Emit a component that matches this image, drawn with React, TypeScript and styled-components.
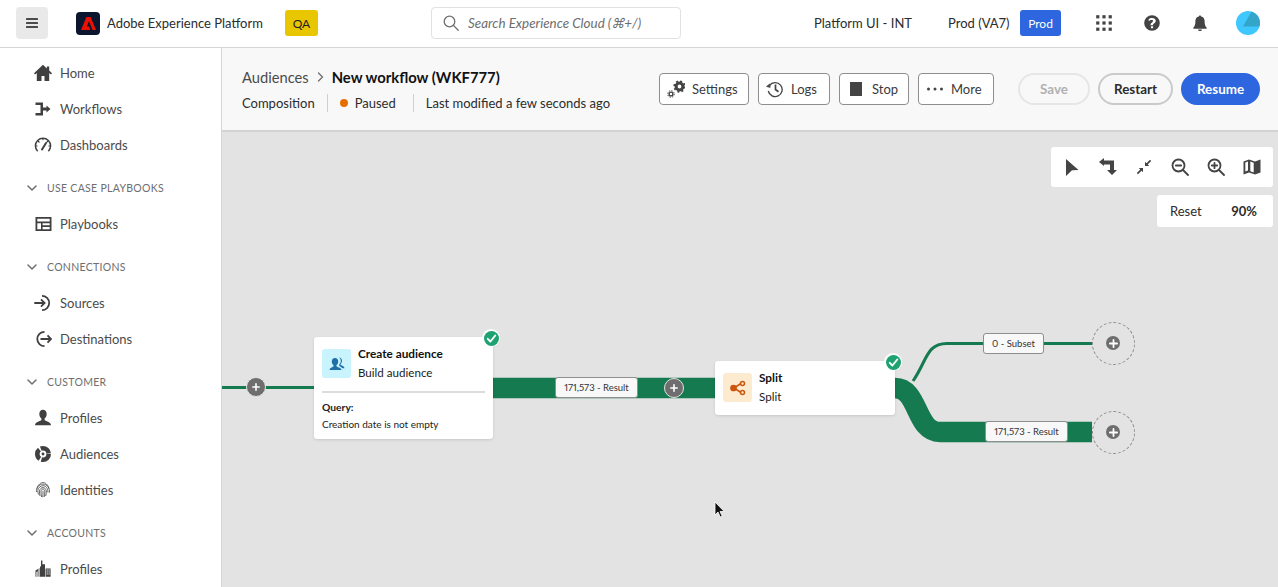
import React from "react";
import styled, { createGlobalStyle } from "styled-components";

const GlobalStyle = createGlobalStyle`
  html, body { margin: 0; padding: 0; height: 100%; overflow: hidden; }
  body { font-family: "Lato", "Open Sans", sans-serif; color: #2c2c2c; background: #fff; }
  #root { height: 100%; }
  * { box-sizing: border-box; }
`;

const Page = styled.div`
  height: 100vh;
  display: flex;
  flex-direction: column;
`;

const TopBar = styled.header`
  height: 48px;
  flex: none;
  display: flex;
  align-items: center;
  background: #fff;
  border-bottom: 1px solid #d5d5d5;
  padding: 0 18px 1px 16px;
`;

const MenuButton = styled.button`
  width: 32px;
  height: 32px;
  flex: none;
  border: 0;
  padding: 0;
  border-radius: 4px;
  background: #e9e9e9;
  display: flex;
  align-items: center;
  justify-content: center;
  color: #4b4b4b;
  margin-right: 28px;
`;

const Logo = styled.div`
  width: 24px;
  height: 23px;
  flex: none;
  border-radius: 4px;
  background: #0b1530;
  display: flex;
  align-items: center;
  justify-content: center;
  margin-right: 7px;
`;

const Product = styled.span`
  font-size: 13px;
  width: 178px;
  flex: none;
  color: #2c2c2c;
`;

const Chip = styled.span<{ $bg: string; $fg: string; $w: number }>`
  width: ${(p) => p.$w}px;
  height: 26px;
  border-radius: 3px;
  background: ${(p) => p.$bg};
  color: ${(p) => p.$fg};
  font-size: 12px;
  display: flex;
  align-items: center;
  justify-content: center;
  flex: none;
`;

const Search = styled.div`
  width: 250px;
  height: 32px;
  flex: none;
  margin-left: 113px;
  border: 1px solid #e1e1e1;
  border-radius: 4px;
  display: flex;
  align-items: center;
  gap: 9px;
  padding-left: 11px;
  color: #6e6e6e;
  font-size: 13.4px;
  font-style: italic;
  white-space: nowrap;
`;

const OrgName = styled.span<{ $ml: number; $w: number }>`
  margin-left: ${(p) => p.$ml}px;
  width: ${(p) => p.$w}px;
  font-size: 13px;
  color: #2c2c2c;
  flex: none;
  white-space: nowrap;
`;

const HeaderIcons = styled.div`
  display: flex;
  align-items: center;
  flex: none;
  margin-left: 35px;
  gap: 32px;
  color: #444;
`;

const Avatar = styled.div`
  width: 24px;
  height: 24px;
  margin-left: -4px;
`;

const Body = styled.div`
  flex: 1;
  min-height: 0;
  display: flex;
`;

const Sidebar = styled.nav`
  width: 222px;
  flex: none;
  background: #fff;
  border-right: 1px solid #d5d5d5;
  padding: 7px 0 0;
  overflow: hidden;
`;

const NavItem = styled.div`
  height: 36px;
  display: flex;
  align-items: center;
  padding-left: 34px;
  gap: 8px;
  font-size: 13px;
  color: #4b4b4b;
  flex: none;
`;

const NavIcon = styled.span`
  width: 18px;
  height: 18px;
  display: flex;
  color: #404040;
`;

const SectionHead = styled.div`
  height: 43px;
  padding: 7px 0 0 27px;
  display: flex;
  align-items: center;
  gap: 10px;
  font-size: 10.5px;
  letter-spacing: 0.3px;
  color: #6e6e6e;
`;

const Main = styled.main`
  flex: 1;
  min-width: 0;
  display: flex;
  flex-direction: column;
`;

const SubHeader = styled.div`
  height: 84px;
  flex: none;
  background: #f8f8f8;
  border-bottom: 2px solid #d3d3d3;
  display: flex;
  align-items: center;
  padding: 0 18px 0 20px;
`;

const TitleBlock = styled.div`
  width: 417px;
  flex: none;
  display: flex;
  flex-direction: column;
  gap: 7px;
  padding-top: 1px;
`;

const Crumbs = styled.div`
  display: flex;
  align-items: center;
  font-size: 14.7px;
  color: #4b4b4b;
  gap: 8px;
  height: 19px;
`;

const CrumbCurrent = styled.strong`
  font-size: 14.8px;
  font-weight: 700;
  color: #111;
`;

const Meta = styled.div`
  display: flex;
  align-items: center;
  font-size: 13px;
  color: #2c2c2c;
  height: 18px;
`;

const MetaCell = styled.span<{ $pr?: number }>`
  display: flex;
  align-items: center;
  gap: 7px;
  height: 18px;
  padding-right: ${(p) => p.$pr ?? 12}px;
  margin-right: 12px;
  border-right: 1px solid #cfcfcf;
  &:last-child { border: 0; margin: 0; padding: 0; }
`;

const Dot = styled.i`
  width: 8px;
  height: 8px;
  border-radius: 50%;
  background: #e46f00;
`;

const ToolButtons = styled.div`
  display: flex;
  gap: 9px;
  width: 359px;
  flex: none;
`;

const ToolButton = styled.button<{ $w: number }>`
  width: ${(p) => p.$w}px;
  height: 32px;
  border: 1px solid #8e8e8e;
  border-radius: 4px;
  background: #fff;
  padding: 0 0 0 7px;
  display: flex;
  align-items: center;
  gap: 7px;
  font: 13px "Lato", sans-serif;
  color: #3a3a3a;
  flex: none;
`;

const PillRow = styled.div`
  display: flex;
  gap: 8px;
`;

const Pill = styled.button<{ $w: number; $kind: "off" | "outline" | "primary" }>`
  width: ${(p) => p.$w}px;
  height: 32px;
  border-radius: 16px;
  font: 700 13.4px "Lato", sans-serif;
  padding: 0;
  border: 2px solid
    ${(p) => (p.$kind === "off" ? "#e6e6e6" : p.$kind === "outline" ? "#cacaca" : "#2d66de")};
  background: ${(p) => (p.$kind === "primary" ? "#2d66de" : "transparent")};
  color: ${(p) => (p.$kind === "off" ? "#b1b1b1" : p.$kind === "outline" ? "#2c2c2c" : "#fff")};
`;

const Canvas = styled.div`
  position: relative;
  flex: 1;
  background: #e3e3e3;
  overflow: hidden;
`;

const EdgeLayer = styled.svg`
  position: absolute;
  left: 0;
  top: 0;
`;

const Panel = styled.div`
  position: absolute;
  background: #fff;
  border-radius: 3px;
`;

const ZoomTools = styled(Panel)`
  right: 5px;
  top: 15px;
  width: 222px;
  height: 40px;
  display: flex;
  align-items: center;
  justify-content: space-between;
  padding: 0 12px;
  color: #444;
`;

const ZoomReadout = styled(Panel)`
  right: 5px;
  top: 63px;
  width: 116px;
  height: 32px;
  display: flex;
  align-items: center;
  justify-content: space-between;
  padding: 0 16px 0 13px;
  font-size: 13px;
`;

const Node = styled.div<{ $x: number; $y: number; $w: number; $h: number }>`
  position: absolute;
  left: ${(p) => p.$x}px;
  top: ${(p) => p.$y}px;
  width: ${(p) => p.$w}px;
  height: ${(p) => p.$h}px;
  background: #fff;
  border-radius: 3px;
  box-shadow: 0 1px 3px rgba(0, 0, 0, 0.12);
  padding: 12px 8px 0;
`;

const NodeHead = styled.div`
  display: flex;
  gap: 7px;
`;

const NodeIcon = styled.div<{ $bg: string }>`
  width: 29px;
  height: 29px;
  border-radius: 3px;
  background: ${(p) => p.$bg};
  display: flex;
  align-items: center;
  justify-content: center;
`;

const NodeTitle = styled.div`
  font-size: 11.8px;
  font-weight: 700;
  color: #111;
  line-height: 15px;
  margin-top: -3px;
`;

const NodeSub = styled.div`
  font-size: 11.6px;
  color: #222;
  line-height: 15px;
  margin-top: 4px;
`;

const NodeBody = styled.div`
  margin-top: 11px;
  border-top: 2px solid #dcdcdc;
  padding-top: 8px;
  font-size: 10px;
  color: #222;
`;

const QueryLabel = styled.div`
  font-size: 10.3px;
  font-weight: 700;
  line-height: 13px;
  margin-bottom: 4px;
`;

const Badge = styled.div<{ $x: number; $y: number }>`
  position: absolute;
  left: ${(p) => p.$x}px;
  top: ${(p) => p.$y}px;
  width: 18px;
  height: 18px;
  border-radius: 50%;
  background: #fff;
  display: flex;
  align-items: center;
  justify-content: center;
`;

const EdgeLabel = styled.div<{ $x: number; $y: number; $w: number }>`
  position: absolute;
  left: ${(p) => p.$x}px;
  top: ${(p) => p.$y}px;
  width: ${(p) => p.$w}px;
  height: 21px;
  border: 1px solid #8e8e8e;
  border-radius: 3px;
  background: #f8f8f8;
  font-size: 9.5px;
  font-variant-numeric: proportional-nums;
  color: #333;
  display: flex;
  align-items: center;
  justify-content: center;
  white-space: nowrap;
`;

const AddDot = styled.div<{ $x: number; $y: number }>`
  position: absolute;
  left: ${(p) => p.$x - 10}px;
  top: ${(p) => p.$y - 10}px;
  width: 20px;
  height: 20px;
  border-radius: 50%;
  background: #6e6e6e;
  border: 1px solid #e3e3e3;
  display: flex;
  align-items: center;
  justify-content: center;
`;

const EndSlot = styled.div<{ $x: number; $y: number }>`
  position: absolute;
  left: ${(p) => p.$x - 21.5}px;
  top: ${(p) => p.$y - 21.5}px;
  width: 43px;
  height: 43px;
  border-radius: 50%;
  border: 1px dashed #8a8a8a;
  display: flex;
  align-items: center;
  justify-content: center;
`;

const EndPlus = styled.div`
  width: 14px;
  height: 14px;
  border-radius: 50%;
  background: #6e6e6e;
  display: flex;
  align-items: center;
  justify-content: center;
`;

const Pointer = styled.svg`
  position: absolute;
  left: 492px;
  top: 369px;
`;

const Plus = ({ size = 8 }: { size?: number }) => (
  <svg width={size} height={size} viewBox="0 0 8 8">
    <path d="M4 .8v6.4M.8 4h6.4" stroke="#fff" strokeWidth="1.6" strokeLinecap="round" />
  </svg>
);

const Check = () => (
  <svg width="15" height="15" viewBox="0 0 15 15">
    <circle cx="7.5" cy="7.5" r="7.5" fill="#1fa271" />
    <path d="M3.8 7.8l2.6 2.7 4.9-6" fill="none" stroke="#fff" strokeWidth="1.9" strokeLinecap="round" strokeLinejoin="round" />
  </svg>
);

const Chevron = () => (
  <svg width="10" height="10" viewBox="0 0 10 10">
    <path d="M1 3l4 4 4-4" fill="none" stroke="#6e6e6e" strokeWidth="1.5" strokeLinecap="round" strokeLinejoin="round" />
  </svg>
);

const Svg = ({ children, size = 18 }: { children: React.ReactNode; size?: number }) => (
  <svg width={size} height={size} viewBox="0 0 18 18" fill="currentColor">
    {children}
  </svg>
);

const icons = {
  home: <path d="M9 .8L0 9.200l1 1.200 1.800-1.500V17h4.700v-5h3v5h4.700V8.900l1.800 1.500 1-1.200-2.800-2.600V2.500h-2.400v2z" />,
  workflows: <path d="M1.500 2.500H9v5h3.500v-2l4 3.500-4 3.500v-2H9v5H1.500V13h5V5h-5z" />,
  dashboards: (
    <g fill="none" stroke="currentColor">
      <path d="M3.600 15.200A7.600 7.600 0 1 1 14.400 15.200" strokeWidth="1.5" />
      <path d="M9 2v2.200M4 5l1.500 1.500M14 5l-1.500 1.500M1.400 10h2.100M16.600 10h-2.100" strokeWidth="1.1" />
      <path d="M8 13.500L12 7" strokeWidth="2" strokeLinecap="round" />
    </g>
  ),
  playbooks: (
    <path fillRule="evenodd" d="M1.500 2h16v14h-16zM3.300 3.800v2.700h12.400V3.800zm0 4.400v6h3.700v-6zm5.300 0v2h7.100v-2zm0 3.800v2.200h7.100V12z" />
  ),
  sources: (
    <g fill="none" stroke="currentColor" strokeWidth="1.800">
      <path d="M8 1.800a7.200 7.200 0 0 1 0 14.400" />
      <path d="M.3 9h10M7 5.400L10.600 9 7 12.600" />
    </g>
  ),
  destinations: (
    <g fill="none" stroke="currentColor" strokeWidth="1.800">
      <path d="M10.500 1.800a7.200 7.200 0 1 0 0 14.400" />
      <path d="M6.500 9H17M13.500 5.400L17 9l-3.500 3.600" />
    </g>
  ),
  profile: <path d="M9 .8c2.300 0 3.700 1.800 3.700 4.200 0 2-1 3.800-2.100 4.600v1.500c0 .9 6.400 1.700 6.400 5.200H1c0-3.500 6.400-4.300 6.400-5.200V9.600C6.300 8.800 5.300 7 5.300 5 5.300 2.600 6.700.8 9 .8z" />,
  audiences: (
    <g fill="none" stroke="currentColor">
      <circle cx="9" cy="9" r="5.700" strokeWidth="4.600" strokeDasharray="10.400 1.540" />
      <circle cx="9" cy="9" r="1.400" fill="currentColor" stroke="none" />
    </g>
  ),
  identities: (
    <g fill="none" stroke="#555" strokeWidth=".9">
      <path d="M3 7.500C4 3.500 7 1.500 9 1.500s5 2 6 6" />
      <path d="M2.500 11c-.6-4 2.500-7.900 6.500-7.900s6.900 3.900 6.500 8.500" />
      <path d="M4.500 13.500c-.5-1-.7-3-.7-4 0-2.500 2.700-4.800 5.200-4.800s5.200 2.200 4.900 6.800" />
      <path d="M6 15c-.5-2-.8-3.500-.5-5.500.3-1.500 2-2.900 3.500-2.900s3.200 1.400 3.300 3.400c.1 2-.2 3.500-.6 5" />
      <path d="M7.600 16c-.4-2-.8-4-.6-6 .1-1 1-1.900 2-1.900s1.800 1 1.800 2c0 2-.1 3.900-.6 5.900" />
      <path d="M9 9.800c0 2.200 0 4.200-.2 6.400" />
    </g>
  ),
  building: (
    <path fillRule="evenodd" d="M7 .6h1.400v3.600H11v12.600H6V6.800l1-.6zM11.600 8.600h5v8.200h-5zm1 1v1h1.200v-1zm1.900 0v1h1.200v-1zm-1.900 2v1h1.200v-1zm1.900 0v1h1.200v-1zm-1.900 2v1h1.200v-1zm1.900 0v1h1.200v-1zM1.500 10.500l2-1.300.9-.5v8.100H3.600v-5.600l-1.200.7v4.900h-.9zM4.900 8.100h.5v8.700h-.5z" />
  ),
};

const navSections: { title?: string; items: [string, keyof typeof icons][] }[] = [
  { items: [["Home", "home"], ["Workflows", "workflows"], ["Dashboards", "dashboards"]] },
  { title: "USE CASE PLAYBOOKS", items: [["Playbooks", "playbooks"]] },
  { title: "CONNECTIONS", items: [["Sources", "sources"], ["Destinations", "destinations"]] },
  { title: "CUSTOMER", items: [["Profiles", "profile"], ["Audiences", "audiences"], ["Identities", "identities"]] },
  { title: "ACCOUNTS", items: [["Profiles", "building"]] },
];

export default function App() {
  return (
    <Page>
      <GlobalStyle />
      <TopBar>
        <MenuButton aria-label="Menu">
          <svg width="14" height="12" viewBox="0 0 14 12" fill="currentColor">
            <rect x="1" y="1" width="12" height="2" rx=".6" />
            <rect x="1" y="5" width="12" height="2" rx=".6" />
            <rect x="1" y="9" width="12" height="2" rx=".6" />
          </svg>
        </MenuButton>
        <Logo>
          <svg width="15" height="13" viewBox="0 0 15 13" fill="#eb1000">
            <path d="M5.400 0h4.200L15 13h-3.500L8 4.300 5.800 9.600h2.500l1 3.400H0z" />
          </svg>
        </Logo>
        <Product>Adobe Experience Platform</Product>
        <Chip $bg="#e8c600" $fg="#222" $w={33}>QA</Chip>
        <Search>
          <svg width="16" height="16" viewBox="0 0 16 16" fill="none" stroke="#6e6e6e" strokeWidth="1.3">
            <circle cx="6.500" cy="6.500" r="5.300" />
            <path d="M10.400 10.400L15.200 15.200" strokeLinecap="round" />
          </svg>
          Search Experience Cloud (⌘+/)
        </Search>
        <OrgName $ml={133} $w={96}>Platform UI - INT</OrgName>
        <OrgName $ml={38} $w={72}>Prod (VA7)</OrgName>
        <Chip $bg="#2d66de" $fg="#fff" $w={41}>Prod</Chip>
        <HeaderIcons>
          <Svg size={16}>
            {[2, 9, 16].flatMap((y) =>
              [2, 9, 16].map((x) => <rect key={`${x}-${y}`} x={x - 1.8} y={y - 1.8} width="3.6" height="3.6" />)
            )}
          </Svg>
          <Svg size={16}>
            <path fillRule="evenodd" d="M9 .2a8.800 8.800 0 1 1 0 17.600A8.800 8.800 0 0 1 9 .200zM7.800 12.700v2.200h2.400v-2.200zM9 3.300c-1.600 0-2.800.5-3.700 1.300V7c.9-.8 2-1.400 3.400-1.400 1 0 1.500.5 1.500 1.100 0 .7-.5 1.100-1.200 1.700-.9.700-1.700 1.400-1.700 2.800v.3h2.800v-.2c0-.6.400-1 1.100-1.600 1-.7 2-1.600 2-3.100 0-2-1.600-3.300-4.200-3.300z" />
          </Svg>
          <Svg size={16}>
            <path d="M9 .5c.8 0 1.300.5 1.300 1.200 2.500.5 3.900 2.500 3.900 5.300 0 3.800.7 5.500 2.300 7.400v1H1.500v-1c1.600-1.900 2.300-3.600 2.300-7.400 0-2.800 1.400-4.800 3.900-5.300C7.700 1 8.200.5 9 .5zM7 16.300h4a2 2 0 0 1-4 0z" />
          </Svg>
          <Avatar>
            <svg width="24" height="24" viewBox="0 0 24 24">
              <circle cx="12" cy="12" r="12" fill="#3ec8ff" />
              <path d="M15.500.5A12 12 0 0 1 24 12c0 1-.1 2-.4 3.500H7z" fill="#33a5c9" />
            </svg>
          </Avatar>
        </HeaderIcons>
      </TopBar>
      <Body>
        <Sidebar>
          {navSections.map((section) => (
            <div key={section.title ?? "top"}>
              {section.title && (
                <SectionHead>
                  <Chevron />
                  {section.title}
                </SectionHead>
              )}
              {section.items.map(([label, icon]) => (
                <NavItem key={label}>
                  <NavIcon>
                    <Svg>{icons[icon]}</Svg>
                  </NavIcon>
                  {label}
                </NavItem>
              ))}
            </div>
          ))}
        </Sidebar>
        <Main>
          <SubHeader>
            <TitleBlock>
              <Crumbs>
                Audiences
                <svg width="7" height="10" viewBox="0 0 7 10">
                  <path d="M1.500 1l4 4-4 4" fill="none" stroke="#6e6e6e" strokeWidth="1.3" strokeLinecap="round" />
                </svg>
                <CrumbCurrent>New workflow (WKF777)</CrumbCurrent>
              </Crumbs>
              <Meta>
                <MetaCell>Composition</MetaCell>
                <MetaCell $pr={17}>
                  <Dot />
                  Paused
                </MetaCell>
                <MetaCell>Last modified a few seconds ago</MetaCell>
              </Meta>
            </TitleBlock>
            <ToolButtons>
              <ToolButton $w={90}>
                <svg width="18" height="18" viewBox="0 0 18 18" fill="none" stroke="#444">
                  <circle cx="12.500" cy="6.500" r="3.400" strokeWidth="3" />
                  <circle cx="12.500" cy="6.500" r="5.300" strokeWidth="1.700" strokeDasharray="2 2.160" />
                  <circle cx="4" cy="14" r="1.900" strokeWidth="1.400" />
                  <circle cx="4" cy="14" r="3.300" strokeWidth="1" strokeDasharray="1.300 1.290" />
                </svg>
                Settings
              </ToolButton>
              <ToolButton $w={72}>
                <svg width="18" height="18" viewBox="0 0 18 18" fill="none" stroke="#444" strokeWidth="1.3">
                  <path d="M3.500 5.500A7 7 0 1 1 2.300 11" />
                  <path d="M.4 6.500l3.400-2.600.4 3.600z" fill="#444" strokeWidth=".6" />
                  <path d="M9.500 4.500v5l3 2.200" strokeWidth="1.700" />
                </svg>
                Logs
              </ToolButton>
              <ToolButton $w={70}>
                <svg width="18" height="18" viewBox="0 0 18 18" fill="#444">
                  <rect x="3" y="2" width="12" height="14" />
                </svg>
                Stop
              </ToolButton>
              <ToolButton $w={76}>
                <svg width="18" height="18" viewBox="0 0 18 18" fill="#444">
                  <circle cx="2.500" cy="9" r="1.500" />
                  <circle cx="9" cy="9" r="1.500" />
                  <circle cx="15.500" cy="9" r="1.500" />
                </svg>
                More
              </ToolButton>
            </ToolButtons>
            <PillRow>
              <Pill $w={72} $kind="off">Save</Pill>
              <Pill $w={75} $kind="outline">Restart</Pill>
              <Pill $w={79} $kind="primary">Resume</Pill>
            </PillRow>
          </SubHeader>
          <Canvas>
            <EdgeLayer width="1056" height="456" viewBox="0 0 1056 456" fill="none">
              <path d="M0 255.500H92" stroke="#157a50" strokeWidth="3" />
              <path d="M271 256H493" stroke="#157a50" strokeWidth="20.5" />
              <path d="M673 256C697 256 693 300 718 300H870" stroke="#157a50" strokeWidth="20.5" />
              <path d="M691 249C705 229 704 211.500 725 211.500H870" stroke="#157a50" strokeWidth="3" />
            </EdgeLayer>
            <ZoomTools>
              <Svg>
                <path d="M3 1L15.500 12 9 12.200 3 18z" />
              </Svg>
              <Svg>
                <path d="M0 4L5 0v2.500h10V12h3l-5 5-5-5h3V6.500H5V8z" />
              </Svg>
              <Svg>
                <path d="M10 8V3.800l1.500 1.500L15 1.800l1.200 1.200-3.500 3.500L14.200 8zM8 10v4.200l-1.500-1.500L3 16.200 1.800 15l3.500-3.500L3.800 10z" />
              </Svg>
              <Svg>
                <g fill="none" stroke="currentColor" strokeWidth="1.8">
                  <circle cx="7.500" cy="7.500" r="6" />
                  <path d="M12 12l5 5M4.800 7.500h5.400" strokeLinecap="round" />
                </g>
              </Svg>
              <Svg>
                <g fill="none" stroke="currentColor" strokeWidth="1.8">
                  <circle cx="7.500" cy="7.500" r="6" />
                  <path d="M12 12l5 5M4.800 7.500h5.400M7.500 4.800v5.400" strokeLinecap="round" />
                </g>
              </Svg>
              <Svg>
                <path fillRule="evenodd" d="M.5 3.500L6 1.500l6 2 5.500-2v13l-5.500 2-6-2-5.500 2zM7.300 3.600v9.700l3.400 1.100V4.700zM2.300 4.600v9l2.700-1V3.600z" />
              </Svg>
            </ZoomTools>
            <ZoomReadout>
              <span>Reset</span>
              <b>90%</b>
            </ZoomReadout>
            <AddDot $x={34} $y={255}>
              <Plus />
            </AddDot>
            <Node $x={92} $y={205} $w={179} $h={102}>
              <NodeHead>
                <NodeIcon $bg="#c9f3fd">
                  <svg width="18" height="18" viewBox="0 0 18 18" fill="#1f6fa8">
                    <path d="M7 3c2 0 3.200 1.500 3.200 3.500 0 1.600-.8 3-1.700 3.600v1.100c0 .8 5 1.500 5 3.800H1.500c0-2.300 4-3 4-3.800v-1.100C4.600 9.500 3.800 8.100 3.800 6.500 3.800 4.500 5 3 7 3z" />
                    <path d="M11 2.500c1.800 0 3 1.400 3 3.200 0 1.500-.7 2.700-1.400 3.200v.9c0 .6 3.900 1.200 3.900 3.500h-2c-.6-1-2.500-1.800-3.200-2.400V9.300c1-.8 1.500-1.900 1.500-3.200 0-1.500-.6-2.600-1.500-3.300.2-.2.500-.3.700-.3z" />
                  </svg>
                </NodeIcon>
                <div>
                  <NodeTitle>Create audience</NodeTitle>
                  <NodeSub>Build audience</NodeSub>
                </div>
              </NodeHead>
              <NodeBody>
                <QueryLabel>Query:</QueryLabel>
                Creation date is not empty
              </NodeBody>
            </Node>
            <Badge $x={260} $y={197}>
              <Check />
            </Badge>
            <EdgeLabel $x={333} $y={245} $w={83}>171,573 - Result</EdgeLabel>
            <AddDot $x={452} $y={256}>
              <Plus />
            </AddDot>
            <Node $x={493} $y={229} $w={180} $h={54}>
              <NodeHead>
                <NodeIcon $bg="#fdebd0">
                  <svg width="18" height="18" viewBox="0 0 18 18" fill="none" stroke="#c9570f" strokeWidth="1.5">
                    <path d="M5 9l7-4.500M5 9l7 4.500" />
                    <circle cx="4.500" cy="9" r="2.600" fill="#c9570f" />
                    <circle cx="13.500" cy="4.500" r="2" />
                    <circle cx="13.500" cy="13.500" r="2" />
                  </svg>
                </NodeIcon>
                <div>
                  <NodeTitle>Split</NodeTitle>
                  <NodeSub>Split</NodeSub>
                </div>
              </NodeHead>
            </Node>
            <Badge $x={662} $y={221}>
              <Check />
            </Badge>
            <EdgeLabel $x={761} $y={201} $w={61}>0 - Subset</EdgeLabel>
            <EdgeLabel $x={763} $y={289} $w={83}>171,573 - Result</EdgeLabel>
            <EndSlot $x={891} $y={211}>
              <EndPlus>
                <Plus size={9} />
              </EndPlus>
            </EndSlot>
            <EndSlot $x={891} $y={300}>
              <EndPlus>
                <Plus size={9} />
              </EndPlus>
            </EndSlot>
            <Pointer width="12" height="18" viewBox="0 0 12 18">
              <path d="M1 1v13l3-3 2.200 5 2-.9L6 10.500h4.200z" fill="#111" stroke="#fff" strokeWidth=".8" />
            </Pointer>
          </Canvas>
        </Main>
      </Body>
    </Page>
  );
}
